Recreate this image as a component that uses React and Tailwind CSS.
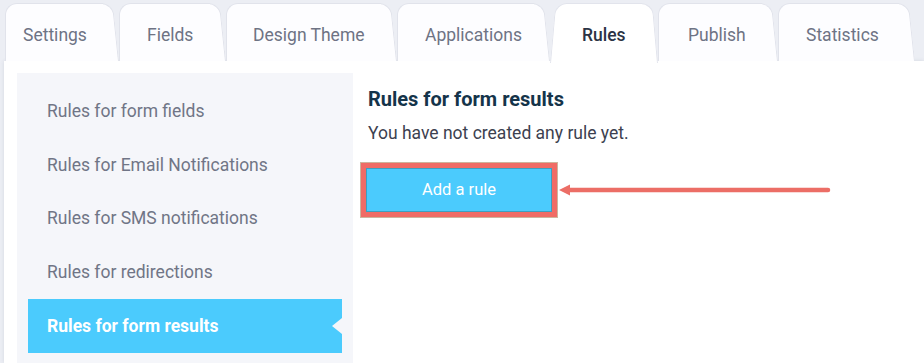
import React from 'react';

const tabs = [
  { label: 'Settings', w: 'w-[114px]', pl: 'pl-[18px]' },
  { label: 'Fields', w: 'w-[107px]', pl: 'pl-[28px]' },
  { label: 'Design Theme', w: 'w-[171px]', pl: 'pl-[27px]' },
  { label: 'Applications', w: 'w-[153px]', pl: 'pl-[28px]' },
  { label: 'Rules', w: 'w-[108px]', pl: 'pl-[32px]', active: true },
  { label: 'Publish', w: 'w-[120px]', pl: 'pl-[30px]' },
  { label: 'Statistics', w: 'w-[137px]', pl: 'pl-[28px]' },
];

const rules = [
  'Rules for form fields',
  'Rules for Email Notifications',
  'Rules for SMS notifications',
  'Rules for redirections',
  'Rules for form results',
];

function Tab({ tab }) {
  if (tab.active) {
    return (
      <div className={`relative z-10 h-[60px] -mb-[2px] shrink-0 ${tab.w}`}>
        {/* slanted sides on both edges */}
        <div className="absolute left-0 top-0 bottom-0 w-[24px] origin-bottom -skew-x-[5deg] rounded-tl-[12px] border-l border-t border-[#e2e4ec] bg-white" />
        <div className="absolute right-0 top-0 bottom-0 w-[24px] origin-bottom skew-x-[5deg] rounded-tr-[12px] border-r border-t border-[#e2e4ec] bg-white" />
        <div className="absolute left-[16px] right-[16px] top-0 bottom-0 border-t border-[#e2e4ec] bg-white" />
        <div className={`relative flex h-[58px] items-center pt-[6px] ${tab.pl} text-[17.5px] font-medium text-[#2b3344]`}>
          {tab.label}
        </div>
      </div>
    );
  }
  return (
    <div className={`relative h-[58px] shrink-0 ${tab.w}`}>
      <div className="absolute right-0 top-0 bottom-0 w-[24px] origin-bottom skew-x-[6deg] rounded-tr-[12px] border-r border-t border-[#e1e3eb] bg-[#fdfdff]" />
      <div className="absolute left-0 right-[16px] top-0 bottom-0 rounded-tl-[12px] border-l border-t border-[#e1e3eb] bg-[#fdfdff]" />
      <div className={`relative flex h-full items-center pt-[6px] ${tab.pl} text-[17.5px] text-[#6e7384]`}>
        {tab.label}
      </div>
    </div>
  );
}

function Arrow() {
  return (
    <svg width="274" height="16" viewBox="0 0 274 16" className="ml-[1px]">
      <line x1="10" y1="8" x2="270" y2="8" stroke="#ec6e66" strokeWidth="4.5" strokeLinecap="round" />
      <polygon points="1,8 12,2.5 12,13.5" fill="#ec6e66" />
    </svg>
  );
}

export default function App() {
  return (
    <div className="flex h-[363px] w-[924px] flex-col overflow-hidden bg-[#eceef4] font-['Roboto',sans-serif]">
      <div className="flex items-end pl-[5px] pt-[3px]">
        {tabs.map((tab) => (
          <Tab key={tab.label} tab={tab} />
        ))}
      </div>

      <div className="ml-[4px] flex flex-1 bg-white pl-[13px] pt-[12px] shadow-[0_0_4px_rgba(60,70,100,0.12)]">
        {/* Sidebar */}
        <div className="w-[336px] shrink-0 bg-[#f5f6fa] px-[11px] pt-[11px]">
          {rules.map((rule, i) => {
            const active = i === rules.length - 1;
            return (
              <div
                key={rule}
                className={
                  active
                    ? 'relative flex h-[53.75px] items-center bg-[#4bcbfd] pl-[19px] text-[17.5px] font-bold text-white'
                    : 'flex h-[53.75px] items-center pl-[19px] text-[17.5px] text-[#707586]'
                }
              >
                {rule}
                {active && (
                  <span className="absolute right-0 top-[19px] h-0 w-0 border-y-[8px] border-r-[10px] border-y-transparent border-r-[#f5f6fa]" />
                )}
              </div>
            );
          })}
        </div>

        {/* Content */}
        <div className="pl-[15px] pt-[13px]">
          <h2 className="text-[20px] font-bold leading-[27px] text-[#15344a]">Rules for form results</h2>
          <p className="mt-[8px] text-[17.5px] leading-[24px] text-[#3c4150]">You have not created any rule yet.</p>
          <div className="mt-[18px] flex items-center -ml-[7px]">
            <div className="border-[5px] border-[#f06c66] outline outline-1 outline-[#cdb59e]">
              <button className="flex h-[44px] w-[186px] items-center justify-center border border-[#3d9fbf] bg-[#4bcbfd] text-[16.5px] text-white">
                Add a rule
              </button>
            </div>
            <Arrow />
          </div>
        </div>
      </div>
    </div>
  );
}
